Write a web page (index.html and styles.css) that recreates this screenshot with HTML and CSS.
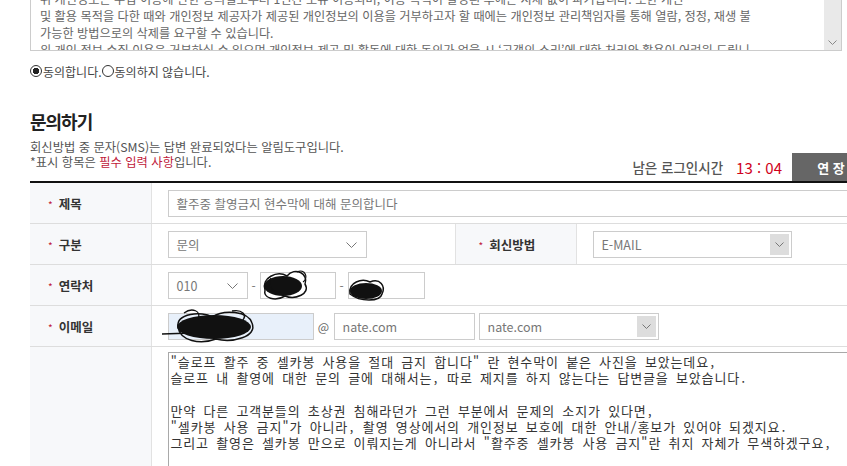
FILE: index.html
```html
<!DOCTYPE html>
<html lang="ko">
<head>
    <meta charset="UTF-8">
    <title>문의하기</title>
    <link rel="stylesheet" href="styles.css">
</head>
<body>
    <div class="page">
        <div class="terms">
            <div class="terms-text">
                위 개인정보는 수집·이용에 관한 동의일로부터 1년간 보유·이용되며, 이용 목적이 달성된 후에는 지체 없이 파기합니다. 또한 개인<br>
                및 활용 목적을 다한 때와 개인정보 제공자가 제공된 개인정보의 이용을 거부하고자 할 때에는 개인정보 관리책임자를 통해 열람, 정정, 재생 불<br>
                가능한 방법으로의 삭제를 요구할 수 있습니다.<br>
                위 개인 정보 수집 이용은 거부하실 수 있으며 개인정보 제공 및 활동에 대한 동의가 없을 시 ‘고객의 소리’에 대한 처리와 활용이 어려워 드립니
            </div>
            <div class="scrollbar">
                <svg class="scroll-arrow" width="9" height="5" viewBox="0 0 9 5"><polyline points="0.5,0.5 4.5,4.5 8.5,0.5" fill="none" stroke="#888" stroke-width="1"/></svg>
            </div>
        </div>

        <div class="agree">
            <span class="radio checked"></span>동의합니다.<span class="radio"></span>동의하지 않습니다.
        </div>

        <h2>문의하기</h2>
        <div class="intro-row">
            <div class="intro">
                <p>회신방법 중 문자(SMS)는 답변 완료되었다는 알림도구입니다.</p>
                <p>*표시 항목은 <span class="must">필수 입력 사항</span>입니다.</p>
            </div>
            <div class="timer">
                <span class="timer-label">남은 로그인시간</span>
                <span class="timer-time">13 : 04</span>
                <button class="btn-extend">연 장</button>
            </div>
        </div>

        <table class="form">
            <colgroup>
                <col class="c-label">
                <col class="c-value">
                <col class="c-label">
                <col>
            </colgroup>
            <tr>
                <th><span class="star">*</span>제목</th>
                <td colspan="3"><div class="field full">활주중 촬영금지 현수막에 대해 문의합니다</div></td>
            </tr>
            <tr>
                <th><span class="star">*</span>구분</th>
                <td>
                    <div class="field select w-type">문의
                        <svg class="chev" width="11" height="6" viewBox="0 0 11 6"><polyline points="0.5,0.5 5.5,5.5 10.5,0.5" fill="none" stroke="#777" stroke-width="1"/></svg>
                    </div>
                </td>
                <th class="th-wide"><span class="star">*</span>회신방법</th>
                <td>
                    <div class="field select boxed w-reply">E-MAIL
                        <span class="chev-box"><svg width="9" height="5" viewBox="0 0 9 5"><polyline points="0.5,0.5 4.5,4.5 8.5,0.5" fill="none" stroke="#777" stroke-width="1"/></svg></span>
                    </div>
                </td>
            </tr>
            <tr>
                <th><span class="star">*</span>연락처</th>
                <td colspan="3">
                    <div class="inline">
                        <div class="field select w-tel1">010
                            <svg class="chev" width="11" height="6" viewBox="0 0 11 6"><polyline points="0.5,0.5 5.5,5.5 10.5,0.5" fill="none" stroke="#777" stroke-width="1"/></svg>
                        </div>
                        <span class="sep">-</span>
                        <div class="field w-tel2"></div>
                        <span class="sep">-</span>
                        <div class="field w-tel3"></div>
                    </div>
                </td>
            </tr>
            <tr>
                <th><span class="star">*</span>이메일</th>
                <td colspan="3">
                    <div class="inline">
                        <div class="field filled w-mail1"></div>
                        <span class="at">@</span>
                        <div class="field w-mail2">nate.com</div>
                        <div class="field select boxed w-mail3">nate.com
                            <span class="chev-box"><svg width="9" height="5" viewBox="0 0 9 5"><polyline points="0.5,0.5 4.5,4.5 8.5,0.5" fill="none" stroke="#777" stroke-width="1"/></svg></span>
                        </div>
                    </div>
                </td>
            </tr>
            <tr>
                <th class="th-empty"></th>
                <td colspan="3" class="td-text">
                    <div class="memo">"슬로프 활주 중 셀카봉 사용을 절대 금지 합니다" 란 현수막이 붙은 사진을 보았는데요,
슬로프 내 촬영에 대한 문의 글에 대해서는, 따로 제지를 하지 않는다는 답변글을 보았습니다.

만약 다른 고객분들의 초상권 침해라던가 그런 부분에서 문제의 소지가 있다면,
"셀카봉 사용 금지"가 아니라, 촬영 영상에서의 개인정보 보호에 대한 안내/홍보가 있어야 되겠지요.
그리고 촬영은 셀카봉 만으로 이뤄지는게 아니라서 "활주중 셀카봉 사용 금지"란 취지 자체가 무색하겠구요,

만약 셀카봉 사용이 위험에 관련된 문제라면 그런 현수막을 붙였다고 하더라도</div>
                </td>
            </tr>
        </table>

        <svg class="scribble s-tel2" width="52" height="34" viewBox="0 0 52 34">
            <ellipse cx="24" cy="18" rx="19" ry="10" fill="#111"/>
            <path d="M6 22 C2 10 18 2 28 8 C36 -2 50 6 46 16 C52 26 36 32 26 28 C16 34 4 30 6 22 Z" fill="none" stroke="#111" stroke-width="1.5"/>
            <path d="M38 4 C46 0 50 10 44 14 M12 10 C8 16 14 26 22 24" fill="none" stroke="#111" stroke-width="1.2"/>
        </svg>
        <svg class="scribble s-tel3" width="42" height="26" viewBox="0 0 42 26">
            <ellipse cx="20" cy="15" rx="16" ry="8" fill="#111"/>
            <path d="M4 18 C2 6 16 2 24 6 C34 2 40 10 36 18 C34 26 14 26 4 18 Z" fill="none" stroke="#111" stroke-width="1.5"/>
        </svg>
        <svg class="scribble s-mail" width="96" height="38" viewBox="0 0 96 38">
            <ellipse cx="52" cy="20" rx="37" ry="12" fill="#111"/>
            <path d="M16 20 C14 6 40 4 50 10 C62 2 86 4 90 16 C96 30 70 36 54 32 C38 38 18 34 16 20 Z" fill="none" stroke="#111" stroke-width="1.5"/>
            <path d="M22 6 C30 0 40 4 36 12 M70 4 C80 2 86 8 80 14" fill="none" stroke="#111" stroke-width="1.3"/>
            <path d="M0 27 L30 26" fill="none" stroke="#111" stroke-width="1.5"/>
        </svg>
    </div>
</body>
</html>
```

FILE: styles.css
```css
html, body {
    overflow: hidden;
}
body {
    margin: 0;
    font-family: "Noto Sans CJK KR", "Noto Sans", sans-serif;
    color: #333;
    background: #fff;
}
.page {
    position: relative;
    width: 840px;
    padding-left: 30px;
}
.terms {
    display: flex;
    width: 810px;
    height: 50px;
    border: 1px solid #ccc;
    border-top: 0;
    overflow: hidden;
}
.terms-text {
    flex: 1;
    margin-top: -9px;
    padding-left: 9px;
    font-size: 12.2px;
    line-height: 17px;
    color: #666;
    white-space: nowrap;
    overflow: hidden;
}
.scrollbar {
    position: relative;
    width: 17px;
    background: #e9e9e9;
}
.scroll-arrow {
    position: absolute;
    left: 4px;
    bottom: 5px;
}
.agree {
    display: flex;
    align-items: center;
    margin-top: 12px;
    height: 16px;
    font-size: 12px;
    color: #444;
}
.radio {
    display: inline-block;
    box-sizing: border-box;
    width: 12px;
    height: 12px;
    margin-right: 1px;
    border: 1px solid #333;
    border-radius: 50%;
    background: #fff;
}
.radio.checked {
    background: radial-gradient(circle, #222 0, #222 3px, #fff 3.5px);
}
h2 {
    margin: 30px 0 0;
    font-size: 18px;
    line-height: 24px;
    font-weight: 700;
    letter-spacing: -1px;
    color: #222;
}
.intro-row {
    display: flex;
    justify-content: space-between;
    align-items: flex-end;
    margin-top: 7px;
}
.intro {
    padding-bottom: 11px;
}
.intro p {
    margin: 0;
    font-size: 12.3px;
    line-height: 15px;
    color: #555;
}
.must {
    color: #c0203a;
}
.timer {
    display: flex;
    align-items: center;
}
.timer-label {
    font-size: 13.5px;
    font-weight: 500;
    color: #555;
}
.timer-time {
    margin: 0 10px 0 13px;
    font-size: 15px;
    color: #d0021b;
}
.btn-extend {
    width: 78px;
    height: 28px;
    border: 0;
    background: #666;
    color: #fff;
    font-family: inherit;
    font-size: 13px;
    font-weight: 700;
}
.form {
    width: 840px;
    border-collapse: collapse;
    border-top: 2px solid #111;
    table-layout: fixed;
}
.c-label {
    width: 121px;
}
.c-value {
    width: 304px;
}
.form th, .form td {
    height: 40px;
    padding: 0;
    border-bottom: 1px solid #ddd;
    vertical-align: middle;
}
.form th {
    padding-left: 18px;
    background: #f7f8fa;
    border-right: 1px solid #e2e2e2;
    text-align: left;
    font-size: 12.5px;
    font-weight: 700;
    color: #333;
}
.form th.th-wide {
    padding-left: 23px;
    border-left: 1px solid #e2e2e2;
}
.form td {
    padding: 0 16px;
}
.star {
    margin-right: 6px;
    font-size: 10px;
    font-weight: 400;
    color: #c0203a;
}
.field {
    position: relative;
    box-sizing: border-box;
    height: 27px;
    padding: 0 8px;
    border: 1px solid #ccc;
    background: #fff;
    font-size: 12.5px;
    line-height: 25px;
    color: #777;
    white-space: nowrap;
}
.field.full {
    width: 100%;
}
.field.filled {
    background: #e8f0fa;
}
.chev {
    position: absolute;
    right: 9px;
    top: 10px;
}
.chev-box {
    position: absolute;
    top: 2px;
    right: 2px;
    bottom: 2px;
    width: 19px;
    display: flex;
    align-items: center;
    justify-content: center;
    background: #ddd;
}
.w-type, .w-reply {
    width: 199px;
}
.inline {
    display: flex;
    align-items: center;
}
.w-tel1 {
    width: 80px;
}
.w-tel2 {
    width: 76px;
}
.w-tel3 {
    width: 77px;
}
.sep {
    width: 12px;
    text-align: center;
    font-size: 12px;
    color: #777;
}
.w-mail1 {
    width: 146px;
}
.at {
    width: 20px;
    text-align: center;
    font-size: 12px;
    color: #666;
}
.w-mail2 {
    width: 141px;
}
.w-mail3 {
    width: 180px;
    margin-left: 4px;
}
.form .th-empty {
    border-bottom: 0;
}
.form .td-text {
    padding-top: 5px;
    vertical-align: top;
    border-bottom: 0;
}
.memo {
    box-sizing: border-box;
    height: 200px;
    padding: 1px 2px;
    border: 1px solid #a9a9a9;
    font-family: "Noto Sans Mono CJK KR", "Liberation Mono", "Noto Sans CJK KR", monospace;
    font-size: 13px;
    line-height: 16.3px;
    letter-spacing: 0.85px;
    color: #333;
    white-space: pre;
    overflow: hidden;
}
.scribble {
    position: absolute;
}
.s-tel2 {
    left: 259px;
    top: 268px;
}
.s-tel3 {
    left: 346px;
    top: 276px;
}
.s-mail {
    left: 162px;
    top: 307px;
}
```
